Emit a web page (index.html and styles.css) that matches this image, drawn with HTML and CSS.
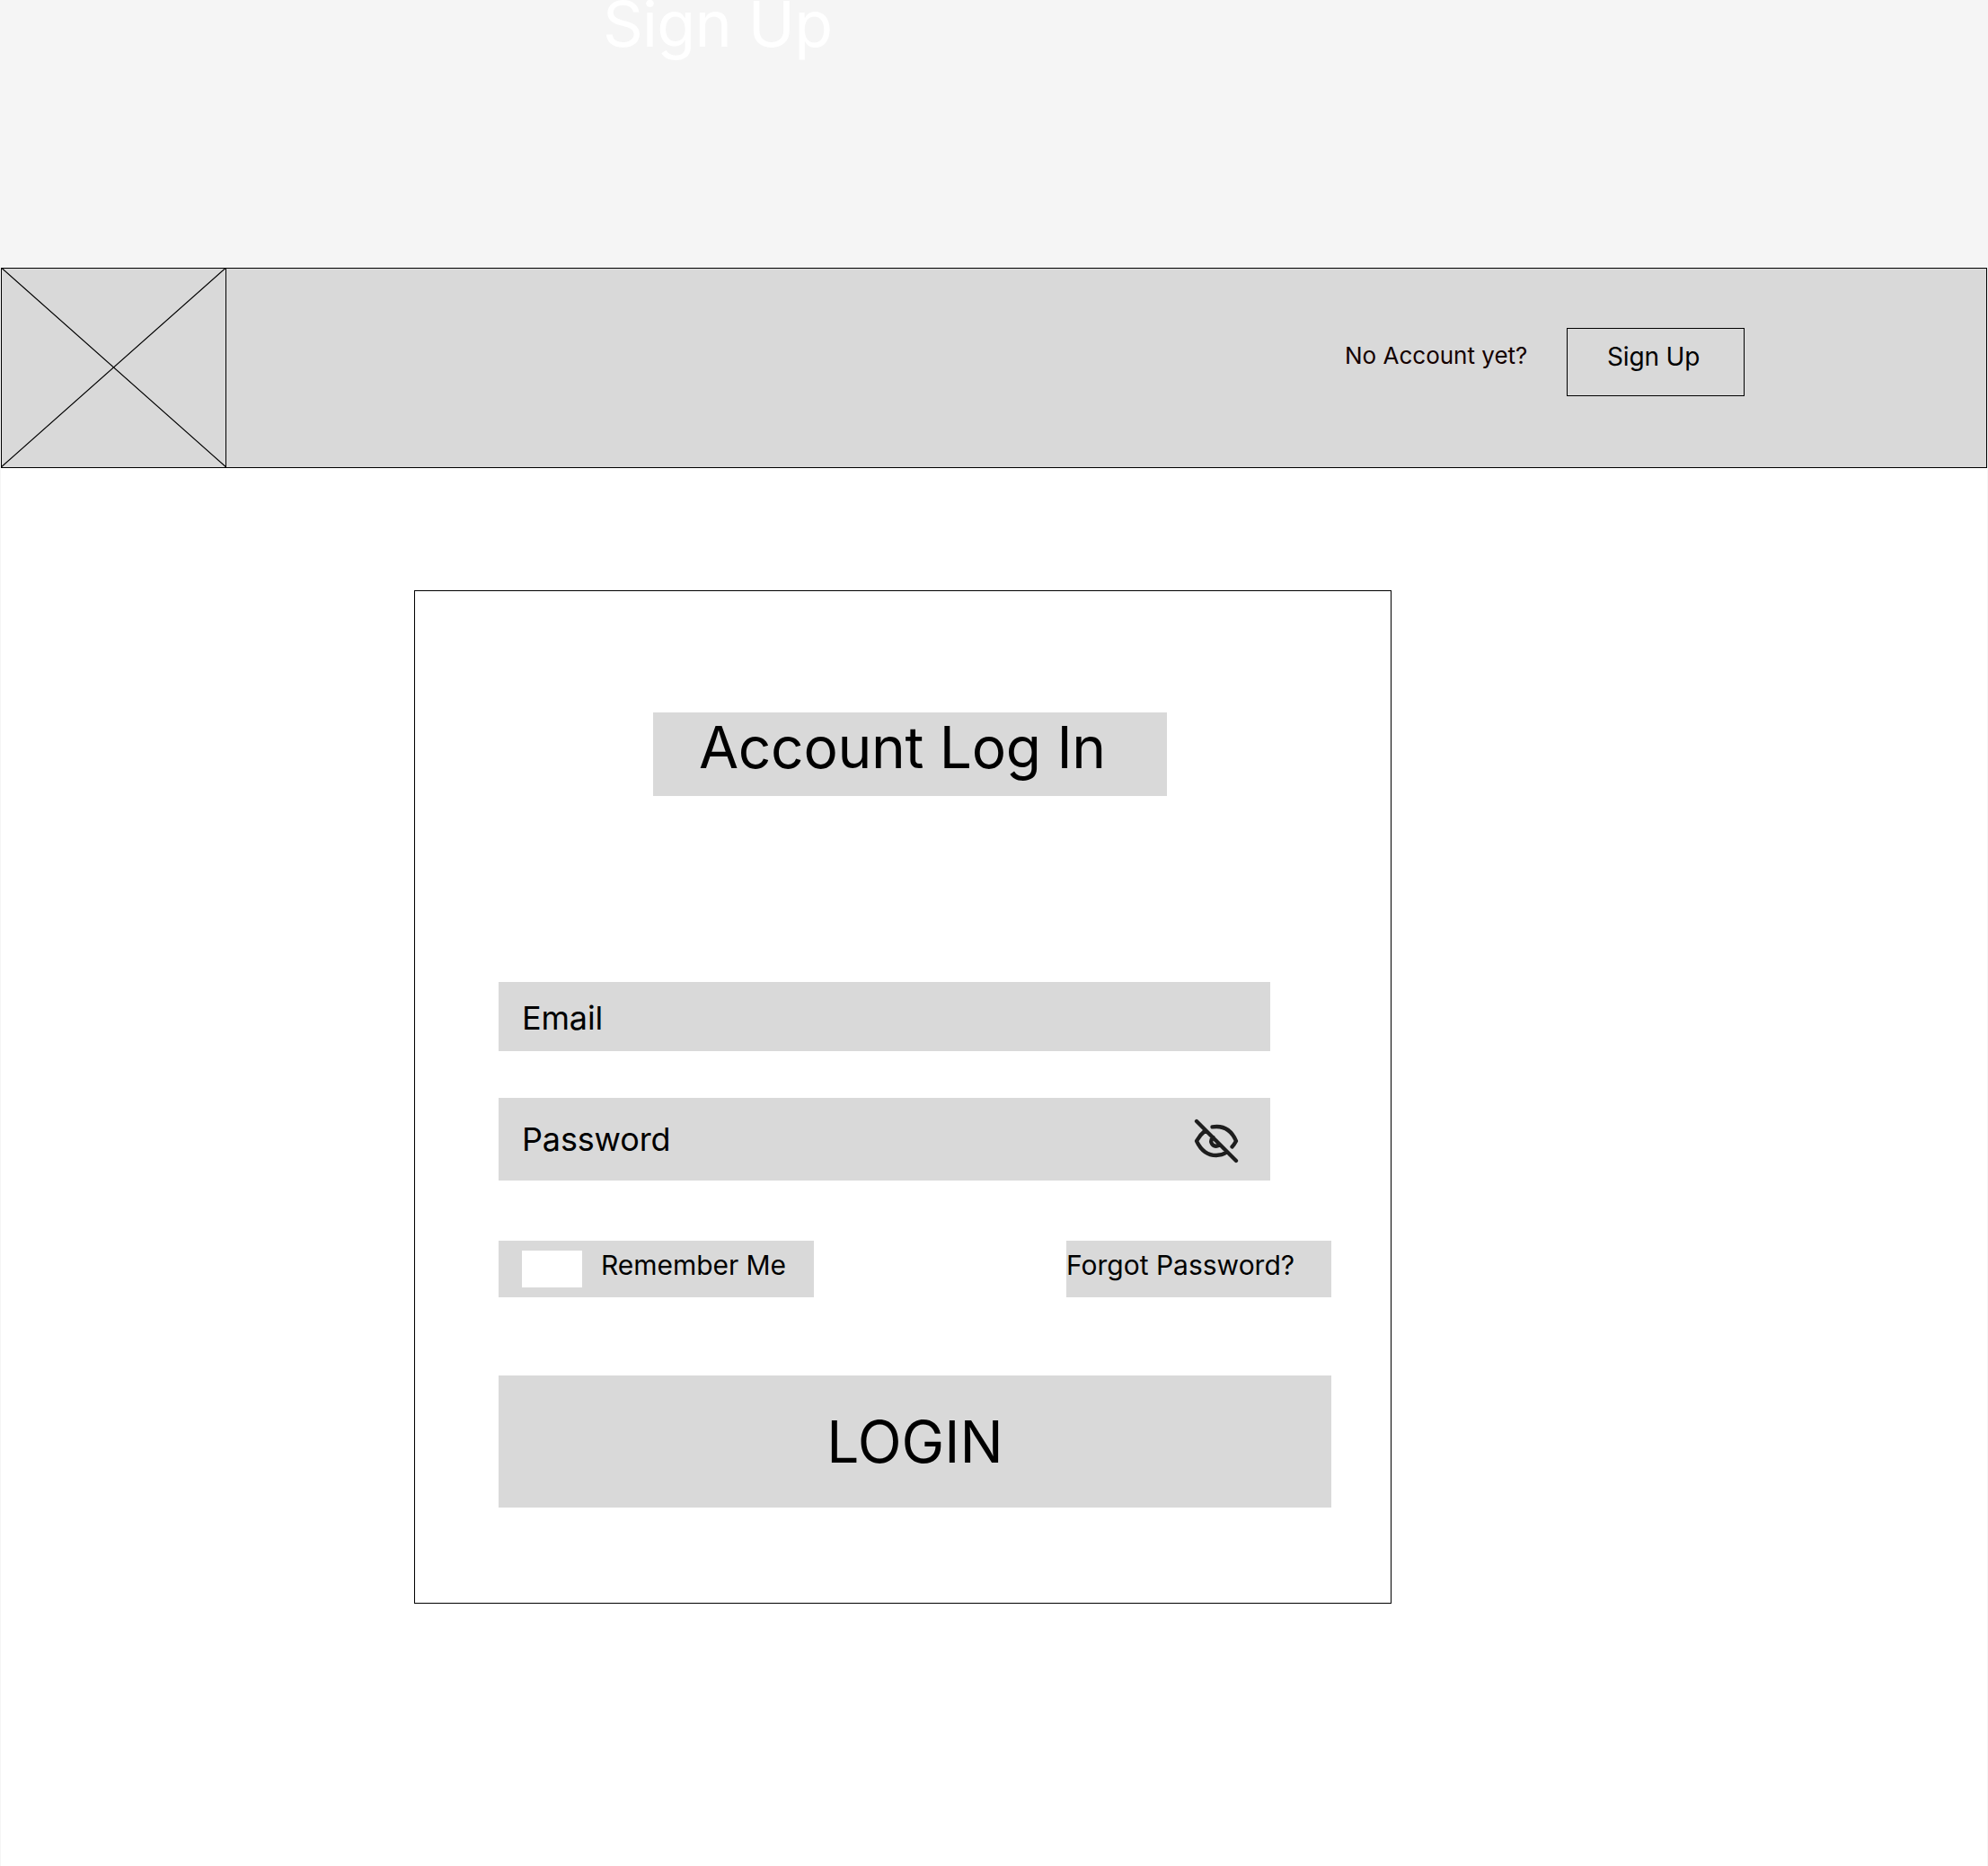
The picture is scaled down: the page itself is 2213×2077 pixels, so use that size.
FILE: index.html
```html
<!DOCTYPE html>
<html lang="en">
<head>
<meta charset="utf-8">
<title>Account Log In</title>
<link rel="stylesheet" href="styles.css">
</head>
<body>
<div class="banner"><span class="banner-title">Sign Up</span></div>
<div class="page">
  <header class="header">
    <svg class="logo" viewBox="0 0 251 223" fill="none" stroke="#000">
      <path d="M.5 0 250.500 221.800M.5 221.800 250.500 0" stroke-width="1.15"/>
      <path d="M250.500 0V223"/>
    </svg>
    <span class="prompt">No Account yet?</span>
    <a class="signup">Sign Up</a>
  </header>
  <main class="card">
    <h1 class="title">Account Log In</h1>
    <form class="form">
      <div class="field email"><span>Email</span></div>
      <div class="field password">
        <span>Password</span>
        <svg class="eye" viewBox="0 0 56 56" fill="none" stroke="#1e1e1e" stroke-width="4.3" stroke-linecap="round" stroke-linejoin="round">
          <path d="M6 6 50 50M15.500 16.500Q9.500 21.500 6 28Q13.500 44 28 44Q34 44 39.500 40.500M23.500 12.400Q42 9.500 50 28Q48.200 31.500 45.500 34.500M24.500 24Q21.500 26.500 22.400 29.700Q24.500 35 30 33.300"/>
        </svg>
      </div>
      <div class="options">
        <label class="remember"><span class="checkbox"></span><span>Remember Me</span></label>
        <a class="forgot">Forgot Password?</a>
      </div>
      <div class="login">LOGIN</div>
    </form>
  </main>
</div>
</body>
</html>
```

FILE: styles.css
```css
* { box-sizing: border-box; }
body {
  margin: 0;
  height: 2077px;
  overflow: hidden;
  display: flex;
  flex-direction: column;
  background: #f5f5f5;
  color: #000;
  font-family: Inter, "Liberation Sans", sans-serif;
}
.banner { height: 298px; flex: none; padding-left: 671px; }
.banner-title {
  display: block;
  margin-top: -16px;
  font-size: 70px;
  line-height: 85px;
  letter-spacing: -0.8px;
  color: #fff;
  white-space: nowrap;
}
.page { flex: 1; margin: 0 1px; background: #fff; }
.header {
  display: flex;
  align-items: flex-start;
  height: 223px;
  border: 1px solid #000;
  background: #d9d9d9;
  white-space: nowrap;
}
.logo { width: 251px; height: 223px; margin: -1px 0 0 -1px; flex: none; }
.prompt {
  width: 247px;
  margin: 81px 0 0 1245px;
  font-size: 26px;
  line-height: 31px;
  color: #140000;
}
.signup {
  width: 198px;
  height: 76px;
  margin-top: 66px;
  padding: 14px 0 0 44px;
  border: 1px solid #000;
  font-size: 28px;
  line-height: 34px;
  letter-spacing: -0.15px;
}
.card {
  width: 1088px;
  height: 1128px;
  margin: 136px 0 0 460px;
  padding: 135px 0 0 93px;
  border: 1px solid #000;
}
.title {
  width: 572px;
  height: 93px;
  margin: 0 0 207px 172px;
  padding-left: 51px;
  background: #d9d9d9;
  font-size: 64px;
  font-weight: 400;
  line-height: 77px;
  letter-spacing: -0.3px;
  white-space: nowrap;
}
.form { width: 927px; }
.field {
  display: flex;
  justify-content: space-between;
  width: 859px;
  background: #d9d9d9;
  font-size: 36px;
  line-height: 44px;
  letter-spacing: -0.15px;
}
.email { height: 77px; padding: 18px 0 0 26px; margin-bottom: 52px; }
.password { height: 92px; padding: 24px 32px 0 26px; margin-bottom: 67px; }
.eye { width: 56px; height: 56px; margin-top: -4px; }
.options {
  display: flex;
  justify-content: space-between;
  height: 63px;
  margin-bottom: 87px;
  font-size: 30px;
  line-height: 36px;
  white-space: nowrap;
}
.remember {
  display: flex;
  align-items: flex-start;
  gap: 21px;
  width: 351px;
  padding: 9px 0 0 26px;
  background: #d9d9d9;
  letter-spacing: -0.05px;
}
.checkbox { width: 67px; height: 41px; margin-top: 2px; background: #fff; }
.forgot { width: 295px; padding-top: 9px; background: #d9d9d9; }
.login {
  height: 147px;
  padding-top: 35px;
  background: #d9d9d9;
  font-size: 64px;
  line-height: 77px;
  text-align: center;
}
```
